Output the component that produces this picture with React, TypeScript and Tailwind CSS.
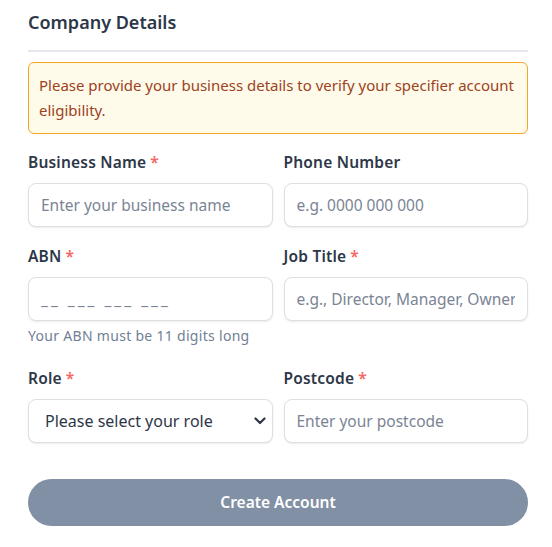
const font = { fontFamily: '"Noto Sans", "Open Sans", sans-serif' };

function Label({ text, required }: { text: string; required?: boolean }) {
  return (
    <label className="mb-[11px] block text-[15.5px] font-semibold leading-5 tracking-[0.2px] text-[#2d3748]">
      {text}
      {required && <span className="ml-1 text-[#f56565]">*</span>}
    </label>
  );
}

function Input({ placeholder, wide }: { placeholder: string; wide?: boolean }) {
  return (
    <input
      placeholder={placeholder}
      className={
        "h-11 w-full rounded-lg border border-[#dcdfe4] bg-white px-[12px] text-[15.5px] text-[#2d3748] shadow-[0_1px_2px_rgba(0,0,0,0.08)] outline-none placeholder:text-[#7b8494] " +
        (wide ? "placeholder:tracking-[3px]" : "")
      }
    />
  );
}

export default function App() {
  return (
    <div className="min-h-screen bg-white pl-7 pr-6" style={font}>
      <h2 className="border-b-2 border-[#e5e7ee] pt-2 pb-[14px] text-lg font-semibold leading-7 text-[#2d3748]">
        Company Details
      </h2>

      <div className="mt-[10px] rounded-md border border-[#f5a524] bg-[#fffbeb] px-[10px] py-[10px] text-[15px] leading-[25px] text-[#9c4221]">
        Please provide your business details to verify your specifier account eligibility.
      </div>

      <div className="mt-[18px] grid grid-cols-2 gap-x-[11px]">
        <div>
          <Label text="Business Name" required />
          <Input placeholder="Enter your business name" />
        </div>
        <div>
          <Label text="Phone Number" />
          <Input placeholder="e.g. 0000 000 000" />
        </div>
      </div>

      <div className="mt-[19px] grid grid-cols-2 gap-x-[11px]">
        <div>
          <Label text="ABN" required />
          <Input placeholder="__ ___ ___ ___" wide />
          <p className="mt-[5px] text-[14px] leading-5 tracking-[0.3px] text-[#718096]">Your ABN must be 11 digits long</p>
        </div>
        <div>
          <Label text="Job Title" required />
          <Input placeholder="e.g., Director, Manager, Owner" />
        </div>
      </div>

      <div className="mt-[22px] grid grid-cols-2 gap-x-[11px]">
        <div>
          <Label text="Role" required />
          <div className="relative">
            <select className="h-11 w-full appearance-none rounded-lg border border-[#dcdfe4] bg-white pl-4 pr-9 text-[16px] text-[#2d3748] shadow-[0_1px_2px_rgba(0,0,0,0.08)] outline-none">
              <option>Please select your role</option>
            </select>
            <svg
              className="pointer-events-none absolute right-[7px] top-1/2 -translate-y-1/2"
              width="12"
              height="8"
              viewBox="0 0 12 8"
              fill="none"
            >
              <path d="M1.5 1.5 6 6l4.5-4.5" stroke="#2d3748" strokeWidth="2.2" strokeLinecap="round" strokeLinejoin="round" />
            </svg>
          </div>
        </div>
        <div>
          <Label text="Postcode" required />
          <Input placeholder="Enter your postcode" />
        </div>
      </div>

      <button className="mt-9 h-[47px] w-full rounded-full bg-[#8190a5] text-[15.5px] font-semibold text-white">
        Create Account
      </button>
    </div>
  );
}
